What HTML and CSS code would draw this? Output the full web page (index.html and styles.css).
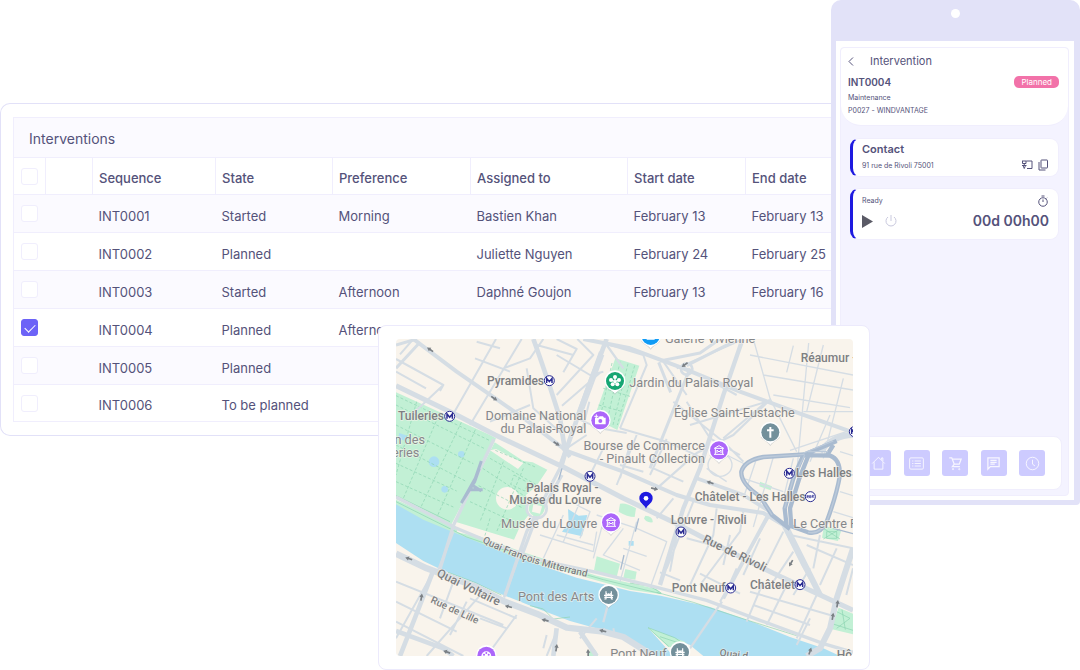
FILE: index.html
```html
<!DOCTYPE html>
<html lang="en">
<head>
<meta charset="utf-8">
<title>Interventions</title>
<link rel="stylesheet" href="styles.css">
</head>
<body>
<main class="stage">
  <section class="panel">
    <h1 class="panel-title">Interventions</h1>
    <table class="grid">
      <colgroup>
        <col class="c-check"><col class="c-blank"><col class="c-seq"><col class="c-state"><col class="c-pref"><col class="c-who"><col class="c-start"><col>
      </colgroup>
      <thead>
        <tr><th><input type="checkbox" aria-label="Select all"></th><th></th><th>Sequence</th><th>State</th><th>Preference</th><th>Assigned to</th><th>Start date</th><th>End date</th></tr>
      </thead>
      <tbody>
        <tr><td><input type="checkbox" aria-label="Select INT0001"></td><td></td><td>INT0001</td><td>Started</td><td>Morning</td><td>Bastien Khan</td><td>February 13</td><td>February 13</td></tr>
        <tr><td><input type="checkbox" aria-label="Select INT0002"></td><td></td><td>INT0002</td><td>Planned</td><td></td><td>Juliette Nguyen</td><td>February 24</td><td>February 25</td></tr>
        <tr><td><input type="checkbox" aria-label="Select INT0003"></td><td></td><td>INT0003</td><td>Started</td><td>Afternoon</td><td>Daphné Goujon</td><td>February 13</td><td>February 16</td></tr>
        <tr><td><input type="checkbox" aria-label="Select INT0004" checked></td><td></td><td>INT0004</td><td>Planned</td><td>Afternoon</td><td></td><td></td><td></td></tr>
        <tr><td><input type="checkbox" aria-label="Select INT0005"></td><td></td><td>INT0005</td><td>Planned</td><td></td><td></td><td></td><td></td></tr>
        <tr><td><input type="checkbox" aria-label="Select INT0006"></td><td></td><td>INT0006</td><td>To be planned</td><td></td><td></td><td></td><td></td></tr>
      </tbody>
    </table>
  </section>

  <section class="phone">
    <div class="phone-top"><span class="camera"></span></div>
    <div class="bezel">
      <div class="screen">
        <header class="job">
          <div class="job-nav">
            <button class="plain" aria-label="Back"><svg width="6" height="9" viewBox="0 0 6 9"><path d="M5 .5 1 4.500 5 8.500" fill="none" stroke="currentColor"/></svg></button>
            <h2>Intervention</h2>
          </div>
          <div class="job-head"><strong>INT0004</strong><span class="badge">Planned</span></div>
          <p>Maintenance</p>
          <p>P0027 - WINDVANTAGE</p>
        </header>
        <div class="cards">
          <article class="card">
            <h3>Contact</h3>
            <div class="row">
              <span class="small">91 rue de Rivoli 75001</span>
              <span class="actions">
                <button class="plain" aria-label="Directions"><svg width="12" height="12" viewBox="0 0 24 24" fill="none" stroke="currentColor" stroke-width="2"><path d="M11 4h11v15H12M2 4h9M3 4v5h7V4M6.500 9v5M2 13h9M4 13l2.500 6L9 13"/></svg></button>
                <button class="plain" aria-label="Copy"><svg width="12" height="12" viewBox="0 0 24 24" fill="none" stroke="currentColor" stroke-width="2"><rect x="8" y="2" width="13" height="16" rx="1"/><path d="M4 6v16h13"/></svg></button>
              </span>
            </div>
          </article>
          <article class="card timer">
            <div class="row">
              <span class="small">Ready</span>
              <svg class="watch" width="12" height="12" viewBox="0 0 24 24" fill="none" stroke="currentColor" stroke-width="2"><circle cx="12" cy="14" r="8.500"/><path d="M9 2h6M12 9v5M18.500 7l1.500-1.500"/></svg>
            </div>
            <div class="row">
              <span class="actions">
                <button class="plain play" aria-label="Start"><svg width="11" height="13" viewBox="0 0 11 13"><path d="M0 0v13l11-6.500z" fill="currentColor"/></svg></button>
                <button class="plain power" aria-label="Stop"><svg width="12" height="12" viewBox="0 0 12 12" fill="none" stroke="currentColor"><path d="M6 0v6M3 2a5 5 0 1 0 6 0"/></svg></button>
              </span>
              <strong class="clock">00d 00h00</strong>
            </div>
          </article>
        </div>
        <nav class="tabs">
          <button aria-label="Home"><svg viewBox="0 0 24 24"><path d="M2 12 12 2l10 10M5 10v11h14V10M17 6V3h2v5"/></svg></button>
          <button aria-label="List"><svg viewBox="0 0 24 24"><rect x="1" y="3" width="22" height="18" rx="2"/><path d="M5 8h2M9 8h10M5 12h2M9 12h10M5 16h2M9 16h10"/></svg></button>
          <button aria-label="Cart"><svg viewBox="0 0 24 24"><path d="M2 3h4l4 10h8l3-8H7M10 13l-3 4h12" stroke-width="2"/><circle cx="8" cy="21" r="1"/><circle cx="18" cy="21" r="1"/></svg></button>
          <button aria-label="Messages"><svg viewBox="0 0 24 24"><path d="M3 3h18v14H7l-4 4zM7 7h10M7 10h10M7 13h7" stroke-width="2"/></svg></button>
          <button aria-label="History"><svg viewBox="0 0 24 24"><circle cx="12" cy="12" r="10"/><path d="M12 6v7l4 3"/></svg></button>
        </nav>
      </div>
    </div>
  </section>

  <section class="map-card">
    <svg class="map" viewBox="18 12 1371 951" role="img" aria-label="Map of central Paris">
      <defs>
        <g id="metro"><circle r="15" fill="#fff" stroke="#2a2b91" stroke-width="3"/><path d="M-8 7V-7L0 3 8-7V7" fill="none" stroke="#2a2b91" stroke-width="4.500"/></g>
        <g id="pin"><path d="M-29 14C-23 25-9 27 0 41 9 27 23 25 29 14z" fill="#8a929b" opacity=".35"/><path d="M0 38C-5 27-31 25-31-1a31 31 0 0 1 62 0C31 25 5 27 0 38z" fill="#fff"/><circle r="27" fill="currentColor"/></g>
        <g id="museum" fill="none" stroke="#fff" stroke-width="3"><path d="M-14-6 0-14 14-6zM-11-5V11M11-5V11M-15 12h30M-6 8V-1L0 5 6-1V8"/></g>
        <g id="bridge" fill="none" stroke="#fff" stroke-width="3.500"><path d="M-13 7h26M-14 1h28M-8-11V13M8-11V13M-8-6C-4 0 4 0 8-6M-13 12h6M7 12h6M0-5v8"/></g>
        <path id="arrow" d="M-11 0 0-7v4H11v5H0v4z" fill="#7b8085"/>
      </defs>
      <rect x="18" y="12" width="1371" height="951" fill="#f9f4ec"/>

      <g class="green">
        <path d="M18 172 300 300 318 310 182 572 18 492z"/>
        <path d="M314 322 400 378 428 382 472 404 440 452 408 480 416 540 392 570 372 614 196 560 248 452z"/>
        <path d="M676 70 748 92 682 285 612 250z"/>
        <path d="M18 494 230 590 400 652 620 722 800 762 816 778 720 764 420 680 210 606 18 522z"/>
        <path d="M690 506q18-4 48 14l-4 26q-22 0-48-16zM766 542q24 2 22 20-20 2-26-12zM620 664 690 686 680 726 612 706zM706 702l34 8-4 24-36-6zM1110 440l36 14-4 12-34-12z"/>
        <path d="M1346 818 1389 836V898l-66-16z"/>
        <path d="M600 944q18-8 24 19h-30zM1302 572l52 14-10 32-48-10z"/>
      </g>
      <g fill="#f9f4ec"><path d="M318 342 388 378 400 384 384 402 300 346z"/><circle cx="352" cy="490" r="34"/><path d="M208 566 280 588 260 604 200 592z"/></g>
      <g class="water">
        <path d="M18 508 100 554 196 594 300 636 386 668 560 728 640 748 720 768 812 782 960 816 1080 858 1200 906 1300 940 1350 963H940L900 930 774 878 850 963H790L700 906 640 886 540 858 440 820 340 780 246 740 150 702 100 678 18 624z"/>
        <circle cx="132" cy="380" r="16"/><circle cx="214" cy="358" r="10"/><circle cx="164" cy="463" r="10"/><path d="M28 294l24 8-6 16-22-8zM534 522l32 20 26-2-16 64-60-14 20-28zM716 618h15v14h-15z"/>
      </g>
      <path class="green" d="M774 878 885 920 900 942 835 936z"/>
      <g class="trail">
        <path d="M18 182 298 316M18 210 286 342M18 330 230 440M18 385 200 468M18 440 190 516M80 200 18 420M150 232 40 490M214 262 90 522M256 284 140 548M18 270 250 386M316 346 436 396M300 370 440 450M278 400 420 494M266 452 400 520M240 500 370 560M340 380 270 560M400 400 320 590M372 420l44 24-12 24-42-20zM300 550 284 604" stroke-dasharray="9 6"/>
        <path d="M666 84 630 250M690 80 650 266M714 86 668 274M734 92 682 270M640 160l80 24M626 210l72 20" stroke-dasharray="9 6"/>
        <path d="M18 500 230 606 410 668 640 734 812 776M18 482 180 560M720 744l60 10 34 20M174 712l80 30 80 38M420 812l40 10 30 30 50-6M800 772l110 30 60 20 110 36 140 44M774 878l80 30 40 26M774 878l62 56M810 905l60 20M1340 830l40 20-40 30M1356 824l10 60M1326 866l63 20M1300 580l50 32M1350 582l-50 30M1310 590h30v20h-30z"/>
      </g>

      <g class="road thin">
        <path d="M255 70 360 110M318 12 188 240M18 72 160 150 150 168M160 150 70 235M70 12l-40 46M330 40l-70-20M18 110l90 50"/>
        <path d="M395 12 240 270M460 12 420 70 340 100M500 12l60 30-40 70M440 30l110 30M562 12 610 60 500 180M410 100 430 220 520 300M500 60 600 120 640 110M516 212 632 112M630 50 560 240M420 210 300 260"/>
        <path d="M660 30 760 60 770 90 690 280M640 60l-70 190M560 250l70 30 80 14M598 200l-20 80M590 300l-60 40M690 280 830 320 940 370M830 312 780 420M740 300 680 450M690 390 760 410M640 340l-40 80M720 330l-30 100M790 400l90 40M890 200l70 110 90 50M850 200l150 120 60 60M860 100 1060 12M820 80 890 180M930 120l110 60M1000 310l130-110M900 270 1130 200"/>
        <path d="M850 490 800 550M910 500l-80 200M980 520 970 600 900 750M1060 530l-10 60-120 160M1140 540 990 800M890 610l90 24M860 600l-20 110M1020 600l-20 90M1110 610l-50 110M1180 590l-60 120M1200 600l189 40M1250 630l139 60M1210 650l-60 90M1260 700l-50 80M1290 600l-20 100M1340 640l-50 110M1389 700l-20 80M1040 700l-40 90M1120 740l-50 120M1190 750l-60 120M1080 770l240 70M1090 810l170 60M1280 780l-60 130M1260 850l-40 80M930 716l120 60M810 712l60 24"/>
        <path d="M18 740 340 870M18 800 200 890M130 710 18 910M280 770 110 963M380 840 290 963M190 740 150 850M240 790l140 60M230 800 180 900M350 880l-80-30M18 860 220 963M500 890l-30 73M620 850l-50 60M640 880q40 40 30 0M460 940l10-40"/>
      </g>
      <g class="road fine">
        <path d="M1090 12 1140 190 1220 350M1080 60l309 60M1120 120l269 45M1150 180l230 38M1210 32l-20 80M1256 24l-36 390M1300 30l-50 200M1360 130l-60 240M1200 346l180-60M1240 230l149 0M1320 240l-60 140M950 400l60 40M950 330l120 60M1060 430l120 40M1100 370l-40 120M1150 366l-60 210M1210 370l-30 120M1350 350l39 12M1340 410l49 10M1350 470l39 12M1330 530l59 18"/>
        <path d="M450 600l160 50 10-60M520 540l-60 130M500 600l110 30M570 500l-50 120M640 560l-30 110M740 560 690 740M620 540l120 40 90 40-50 140M700 580l-60 80 110 46M700 640l70 24M560 510l40 20-30 80"/>
      </g>
      <g class="road">
        <path d="M70 12 200 110 316 190 410 256 520 340 540 366" stroke-width="12"/>
        <path d="M430 12 448 62 478 150 510 250 526 352 512 400" stroke-width="14"/>
        <path d="M650 12 590 170 530 340 510 396" stroke-width="14"/>
        <path d="M18 30 80 12M90 22 18 100" stroke-width="9"/>
        <path d="M18 152 200 240 316 300 520 396 700 490 860 566 1000 640 1150 715 1389 826" stroke-width="15"/>
        <path d="M530 348 700 410 860 480 960 510 1120 534 1180 570 1240 690 1290 780" stroke-width="12"/>
        <path d="M580 12 720 40 880 100 1050 170 1230 236 1389 292" stroke-width="12"/>
        <path d="M1058 12 1000 180 930 400 880 520 810 750" stroke-width="13"/>
        <path d="M810 78 930 54 990 12M890 92 1030 20M900 100l-60 150-60 150M806 82l36 90" stroke-width="9"/>
        <path d="M920 430 1060 480 1140 530 1000 790" stroke-width="11"/>
        <path d="M794 466 920 354 1030 300 1140 194M700 100 650 30" stroke-width="7"/>
        <path d="M18 486 196 578 300 622 440 674 620 712 780 752 950 796 1110 856 1300 926 1389 952" stroke-width="10"/>
        <path d="M18 656 110 700 260 756 340 798 440 836 530 878 640 890 700 906 790 963" stroke-width="19"/>
        <path d="M130 706 90 810 30 963M500 880 490 963M570 890 620 963M18 888 160 940 190 963" stroke-width="14"/>
        <path d="M1389 640 1340 790 1320 880 1290 940 1250 963M1190 580 1290 780M1389 300Q1330 300 1290 350" stroke-width="18"/>
        <path d="M312 312 190 572 150 702M510 400 410 590 386 660 344 784M516 420 430 570 396 660" stroke-width="10"/>
        <path d="M190 590 145 704M388 660 342 788M656 800 640 862M996 800 900 940" stroke-width="7"/>
        <circle cx="440" cy="520" r="30" stroke-width="8"/><circle cx="890" cy="102" r="17" stroke-width="8"/><ellipse cx="990" cy="390" rx="36" ry="34" stroke-width="4"/>
      </g>
      <circle cx="440" cy="520" r="24" fill="#c2f0d5"/>
      <path d="M430 508 456 514 450 536 426 530z" fill="#f9f4ec"/>
      <g class="tunnel">
        <path d="M1244 358 1120 366Q1064 376 1054 410 1052 446 1110 484L1146 540 1200 582"/>
        <path d="M1340 318 1240 360 1210 430 1184 520 1190 574M1256 360 1228 430 1200 520 1204 574M1244 360 1320 362Q1350 372 1350 420 1340 480 1310 560 1290 600 1254 592L1200 572M1330 330 1310 362"/>
        <path d="M274 378 256 430 214 504M268 400 254 440 216 500M240 464l38 0M246 450l28 18" stroke-width="9"/>
        <path d="M516 400l-10 34M1330 580l59 16M746 550l-10 40M702 660l-10 44" stroke-width="4"/>
      </g>
      <g class="tunnel-line"><path d="M1244 358 1120 366Q1064 376 1054 410 1052 446 1110 484L1146 540M1244 360 1210 430 1184 520M1350 420Q1340 480 1310 560 1290 600 1254 592M1240 354l90-36M1254 350h60"/></g>

      <g>
        <use href="#arrow" transform="translate(120 44) rotate(35)"/><use href="#arrow" transform="translate(313 190) rotate(215)"/><use href="#arrow" transform="translate(500 326) rotate(215)"/>
        <use href="#arrow" transform="translate(884 90) rotate(-35)"/><use href="#arrow" transform="translate(794 461) rotate(195)"/><use href="#arrow" transform="translate(960 443) rotate(20)"/>
        <use href="#arrow" transform="translate(1203 685) rotate(-60)"/><use href="#arrow" transform="translate(1342 806) rotate(100)"/><use href="#arrow" transform="translate(1328 844) rotate(100)"/>
        <use href="#arrow" transform="translate(1260 948) rotate(110)"/><use href="#arrow" transform="translate(56 671) rotate(20)"/><use href="#arrow" transform="translate(94 786) rotate(100)"/>
        <use href="#arrow" transform="translate(355 815) rotate(15)"/><use href="#arrow" transform="translate(465 856) rotate(15)"/><use href="#arrow" transform="translate(638 888) rotate(15)"/>
        <use href="#arrow" transform="translate(499 938) rotate(100)"/><use href="#arrow" transform="translate(170 951) rotate(20)"/><use href="#arrow" transform="translate(594 953) rotate(90)"/>
      </g>

      <g class="label">
        <text x="825" y="24">Galerie Vivienne</text>
        <text x="718" y="157">Jardin du Palais Royal</text>
        <text x="852" y="245">Église Saint-Eustache</text>
        <text x="589" y="255" text-anchor="end">Domaine National</text>
        <text x="589" y="294" text-anchor="end">du Palais-Royal</text>
        <text x="945" y="345" text-anchor="end">Bourse de Commerce</text>
        <text x="945" y="384" text-anchor="end">- Pinault Collection</text>
        <text x="105" y="326" text-anchor="end">n des</text>
        <text x="88" y="365" text-anchor="end">eries</text>
        <text x="622" y="580" text-anchor="end">Musée du Louvre</text>
        <text x="613" y="799" text-anchor="end">Pont des Arts</text>
        <text x="830" y="968" text-anchor="end">Pont Neuf</text>
        <text x="1210" y="578">Le Centre P</text>
      </g>
      <g class="label station">
        <text x="291" y="149">Pyramides</text>
        <text x="24" y="256">Tuileries</text>
        <text x="1232" y="81">Réaumur -</text>
        <text x="626" y="472" text-anchor="end">Palais Royal -</text>
        <text x="634" y="508" text-anchor="end">Musée du Louvre</text>
        <text x="1218" y="427">Les Halles</text>
        <text x="914" y="498">Châtelet - Les Halles</text>
        <text x="842" y="566">Louvre - Rivoli</text>
        <text x="845" y="770">Pont Neuf</text>
        <text x="1080" y="761">Châtelet</text>
        <text x="1340" y="972">Hô</text>
        <text transform="translate(936 620) rotate(26)">Rue de Rivoli</text>
        <text transform="translate(138 722) rotate(26)">Quai Voltaire</text>
      </g>
      <g class="label street">
        <path id="quai" d="M276 622Q400 686 600 728" fill="none" stroke="none"/>
        <text><textPath href="#quai">Quai François Mitterrand</textPath></text>
        <text transform="translate(120 802) rotate(25)">Rue de Lille</text>
        <text transform="translate(988 962) rotate(8)">Quai d</text>
      </g>

      <use href="#metro" x="478" y="137"/><use href="#metro" x="179" y="244"/><use href="#metro" x="600" y="424"/><use href="#metro" x="1198" y="415"/><use href="#metro" x="873" y="591"/><use href="#metro" x="1022" y="759"/><use href="#metro" x="1230" y="749"/><use href="#metro" x="1393" y="290"/>
      <g transform="translate(1261 485)"><circle r="15" fill="#fff" stroke="#2a2b91" stroke-width="3"/><path d="M-10-4V4M-10-3h5v3h-5l5 4M-2-4V4M-2-3h4M-2 0h4M-2 3h4M5 4V-4h5v3H5l5 5" fill="none" stroke="#2a2b91" stroke-width="2"/></g>

      <g transform="translate(782 3)" color="#109bf5"><use href="#pin"/><path d="M-12-8h24V11h-24z" fill="#fff"/></g>
      <g transform="translate(675 138)" color="#16a673"><use href="#pin"/><g fill="#fff"><circle cy="-12" r="6"/><circle cx="12" cy="-3" r="6"/><circle cx="7" cy="10" r="6"/><circle cx="-7" cy="10" r="6"/><circle cx="-12" cy="-3" r="6"/><path d="M-2-10h4v8l8-1 1 3-8 3 5 7-3 2-5-7-5 7-3-2 5-7-8-3 1-3 8 1z"/></g></g>
      <g transform="translate(631 256)" color="#ac66fa"><use href="#pin"/><path d="M-16-8H-6L-2-12H8l3 4h5V12h-32z" fill="#fff"/><circle cy="2" r="6" fill="#ac66fa"/><path d="M-12-18v12M-18-12h12" stroke="#fff" stroke-width="3"/></g>
      <g transform="translate(987 346)" color="#ac66fa"><use href="#pin"/><use href="#museum"/></g>
      <g transform="translate(663 562)" color="#ac66fa"><use href="#pin"/><use href="#museum"/></g>
      <g transform="translate(1141 292)" color="#73909b"><use href="#pin"/><path d="M0-16V16M-10-6h20" stroke="#fff" stroke-width="6"/></g>
      <g transform="translate(656 780)" color="#73909b"><use href="#pin"/><use href="#bridge"/></g>
      <g transform="translate(870 951)" color="#73909b"><use href="#pin"/><use href="#bridge"/></g>
      <g transform="translate(289 962)" color="#ac66fa"><use href="#pin"/><path d="M-15 2a15 15 0 0 1 30 0z" fill="#fff"/><g fill="#ac66fa"><circle cx="-7" cy="-3" r="3"/><circle cy="-8" r="3"/><circle cx="7" cy="-3" r="3"/></g></g>
      <path d="M768 521C762 508 748 504 748 490a20 20 0 0 1 40 0c0 14-14 18-20 31z" fill="#1e1ae0"/><circle cx="768" cy="490" r="7" fill="#fff"/>
    </svg>
  </section>
</main>
</body>
</html>
```
FILE: styles.css
```css
* { box-sizing: border-box; }
body {
  margin: 0;
  background: #fff;
  color: #54527a;
  font: 13px/20px Inter, "Liberation Sans", sans-serif;
}
h1, h2, h3, p { margin: 0; font-weight: 400; }
button { font: inherit; color: inherit; border: 0; padding: 0; background: none; cursor: pointer; }
svg { display: block; }

.stage {
  position: relative;
  display: flex;
  align-items: flex-start;
  min-height: 100vh;
  overflow: hidden;
}

/* interventions list */
.panel {
  flex: 1;
  min-width: 0;
  margin-top: 103px;
  padding: 13px 0 13px 12px;
  border: 1px solid #e2e1f8;
  border-right: 0;
  border-radius: 10px 0 0 10px;
  background: #fff;
}
.panel-title {
  padding: 11px 15px 8px;
  border: 1px solid #f0eefd;
  border-width: 1px 0 0 1px;
  background: #fbfaff;
  font-size: 14px;
}
.grid { width: 100%; table-layout: fixed; border-collapse: collapse; }
.c-check { width: 32px; }
.c-blank { width: 47px; }
.c-seq { width: 123px; }
.c-state { width: 117px; }
.c-pref { width: 138px; }
.c-who { width: 157px; }
.c-start { width: 118px; }
.grid tr { height: 38px; border: 1px solid #f0eefd; border-right: 0; }
.grid thead tr { height: 37px; }
.grid tbody tr:nth-child(odd) { background: #fbfaff; }
.grid tbody tr:last-child { height: 37px; background: #fff; }
.grid th, .grid td {
  padding: 4px 0 0 6px;
  text-align: left;
  white-space: nowrap;
  font-weight: 400;
}
.grid th { font-weight: 500; border: 1px solid #f0eefd; border-right: 0; }
.grid th:first-child, .grid td:first-child { padding: 0 0 0 7px; }
.grid input {
  appearance: none;
  display: block;
  width: 17px;
  height: 17px;
  margin: 0;
  border: 1px solid #f0eefd;
  border-radius: 3px;
  background: #fff;
}
.grid input:checked { background: #6c63f7; border-color: #6c63f7; }
.grid input:checked::after {
  content: "";
  display: block;
  width: 9px;
  height: 5px;
  margin: 4px 3px;
  border: solid #fff;
  border-width: 0 0 1px 1px;
  transform: rotate(-45deg);
}

/* phone */
.phone {
  flex: none;
  width: 249px;
  padding: 0 6px 5px 5px;
  border-radius: 10px 10px 4px 4px;
  background: #e2e2f8;
}
.phone-top { display: flex; justify-content: center; height: 41px; padding-top: 9px; }
.camera { width: 9px; height: 9px; border-radius: 50%; background: #fff; }
.bezel { padding: 6px 5px 4px 4px; background: #fff; }
.screen {
  display: flex;
  flex-direction: column;
  min-height: 449px;
  border: 1px solid #f0eefd;
  border-radius: 4px;
  background: #f4f3ff;
}
.job {
  padding: 4px 9px 8px 7px;
  border-bottom: 1px solid #f0eefd;
  border-radius: 4px 4px 20px 20px;
  background: #fff;
}
.job-nav { display: flex; align-items: center; gap: 16px; margin-bottom: 3px; }
.job-nav h2 { font-size: 11px; line-height: 18px; }
.job-head { display: flex; align-items: center; justify-content: space-between; height: 18px; font-size: 10px; }
.job-head strong, .card h3, .clock { font-weight: 600; }
.badge {
  padding: 0 7px;
  border-radius: 5px;
  background: #f272a9;
  color: #fff;
  font-size: 8px;
  line-height: 12px;
}
.job p, .small { font-size: 7px; line-height: 13px; }
.cards { display: flex; flex-direction: column; gap: 11px; padding: 12px 9px; }
.card {
  padding: 1px 9px 4px;
  border: 1px solid #f0eefd;
  border-left: 3px solid #1e1ae0;
  border-radius: 9px;
  background: #fff;
}
.card h3 { font-size: 11px; line-height: 18px; }
.row { display: flex; align-items: center; justify-content: space-between; }
.actions { display: flex; align-items: center; gap: 4px; }
.timer { padding: 5px 9px 4px; }
.timer .actions { gap: 12px; }
.play { color: #5a5a66; }
.power { color: #c9c9de; }
.clock { font-size: 14px; line-height: 28px; }
.card:first-child .row { height: 14px; }
.tabs {
  display: flex;
  justify-content: space-between;
  margin: auto 6px 5px 0;
  padding: 13px 16px 13px 23px;
  border: 1px solid #f0eefd;
  border-radius: 8px;
  background: #fff;
}
.tabs button {
  display: grid;
  place-items: center;
  width: 26px;
  height: 26px;
  border-radius: 3px;
  background: #cdcbff;
}
.tabs svg { width: 15px; height: 15px; fill: none; stroke: #f7f6ff; stroke-width: 1.5; }

/* map window, floating over both panels */
.map-card {
  position: absolute;
  top: 325px;
  left: 35%;
  right: 210px;
  padding: 13px 16px 13px 17px;
  border: 1px solid #eceafc;
  border-radius: 8px;
  background: #fff;
}
.map { width: 100%; height: auto; border-radius: 4px; }
.green { fill: #c2f0d5; }
.water { fill: #addff2; }
.trail { fill: none; stroke: #8bd3b1; stroke-width: 2; }
.road { fill: none; stroke: #d5dde4; stroke-linejoin: round; }
.thin { stroke-width: 6; }
.fine { stroke-width: 4; }
.tunnel { fill: none; stroke: #a9bbd0; stroke-width: 13; stroke-linejoin: round; }
.tunnel-line { fill: none; stroke: #bccada; stroke-width: 4; }
.label {
  font-family: Roboto, "Liberation Sans", sans-serif;
  font-size: 38px;
  fill: #85878a;
  stroke: #f9f4ec;
  stroke-width: 4;
  stroke-opacity: .7;
  paint-order: stroke;
}
.station { font-size: 36px; font-weight: 500; fill: #7d7f82; }
.street { font-size: 30px; font-weight: 500; fill: #7d7f82; }
```
